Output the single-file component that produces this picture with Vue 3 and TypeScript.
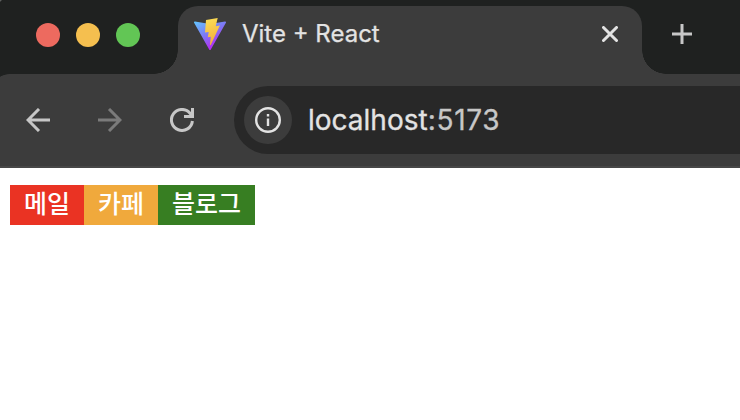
<script setup lang="ts">
interface MenuLink {
  label: string
  tone: string
}

const lights: string[] = ['close', 'minimize', 'expand']
const links: MenuLink[] = [
  { label: '메일', tone: 'mail' },
  { label: '카페', tone: 'cafe' },
  { label: '블로그', tone: 'blog' },
]
</script>

<template>
  <div class="window">
    <header class="strip">
      <div class="lights">
        <span v-for="light in lights" :key="light" class="light" :class="light"></span>
      </div>
      <div class="tab">
        <svg class="favicon" viewBox="0 0 32 32" width="32" height="32">
          <defs>
            <linearGradient id="shield" x1="0" y1="0" x2="0.58" y2="0.9">
              <stop offset="0" stop-color="#62c8ff" />
              <stop offset="0.55" stop-color="#7d78f5" />
              <stop offset="1" stop-color="#b42df2" />
            </linearGradient>
            <linearGradient id="bolt" x1="0.4" y1="0" x2="0.6" y2="1">
              <stop offset="0" stop-color="#fbdc55" />
              <stop offset="1" stop-color="#f3ac3a" />
            </linearGradient>
          </defs>
          <path
            d="M31.9 4.7 16.8 31.6a.9.9 0 0 1-1.6 0L.1 4.7a.9.9 0 0 1 .9-1.3L16 6.1 31 3.4a.9.9 0 0 1 .9 1.3Z"
            fill="url(#shield)"
          />
          <path
            d="M23.7 0 12 2 11 14.6 14.7 14.1 13.8 19.3 16.8 18.8 15.9 27 16.7 27 25.9 7.5 21.7 8.2Z"
            fill="url(#bolt)"
          />
        </svg>
        <span class="title">Vite + React</span>
        <svg class="dismiss" viewBox="0 0 16 16" width="16" height="16">
          <path d="M1.5 1.5 14.5 14.5M14.5 1.5 1.5 14.5" />
        </svg>
      </div>
      <svg class="new-tab" viewBox="0 0 20 20" width="20" height="20">
        <path d="M10 0V20M0 10H20" />
      </svg>
    </header>

    <nav class="toolbar">
      <svg class="icon" viewBox="0 0 24 24" width="24" height="24">
        <path d="M24 12H2M13 1 2 12 13 23" />
      </svg>
      <svg class="icon muted" viewBox="0 0 24 24" width="24" height="24">
        <path d="M0 12H22M11 1 22 12 11 23" />
      </svg>
      <svg class="icon" viewBox="0 0 24 24" width="24" height="24">
        <path d="M22.4 13A10.5 10.5 0 1 1 20 5.2L22 8.2" />
        <path d="M22.5 0V8.5H14" />
      </svg>
      <div class="address">
        <span class="info">
          <svg viewBox="0 0 26 26" width="26" height="26">
            <circle cx="13" cy="13" r="11.8" />
            <path d="M13 11.6V19M13 6.9V9.4" />
          </svg>
        </span>
        <span class="url">localhost<span class="port">:5173</span></span>
      </div>
    </nav>

    <main class="page">
      <a v-for="link in links" :key="link.label" class="link" :class="link.tone">{{ link.label }}</a>
    </main>
  </div>
</template>

<style>
body {
  margin: 0;
  overflow: hidden;
}
</style>

<style scoped>
.window {
  width: 740px;
  height: 420px;
  overflow: hidden;
  background: #fff;
  font-family: Inter, Roboto, sans-serif;
}

.strip {
  display: flex;
  box-sizing: border-box;
  height: 74px;
  padding-top: 6px;
  background: radial-gradient(circle at 14px 14px, #1f2120 18px, #5d5f5e 19px) 0 0 / 6px 6px no-repeat #1f2120;
}

.lights {
  display: flex;
  box-sizing: border-box;
  width: 178px;
  padding: 17px 0 0 36px;
  gap: 16px;
}

.light {
  width: 24px;
  height: 24px;
  border-radius: 50%;
}

.close {
  background: #ed6a5f;
}

.minimize {
  background: #f5bf4f;
}

.expand {
  background: #62c655;
}

.tab {
  position: relative;
  display: flex;
  box-sizing: border-box;
  align-items: center;
  width: 464px;
  height: 68px;
  padding: 0 24px 12px 16px;
  border-radius: 20px 20px 0 0;
  background: #3c3c3c;
}

.tab::before,
.tab::after {
  content: '';
  position: absolute;
  bottom: 0;
  width: 24px;
  height: 24px;
}

.tab::before {
  right: 100%;
  background: radial-gradient(circle at 0 0, transparent 23.5px, #3c3c3c 24px);
}

.tab::after {
  left: 100%;
  background: radial-gradient(circle at 100% 0, transparent 23.5px, #3c3c3c 24px);
}

.title {
  margin-left: 16px;
  color: #e3e3e3;
  font-size: 24px;
  line-height: 32px;
  white-space: nowrap;
  -webkit-text-stroke: 0.25px #e3e3e3;
}

.dismiss {
  margin-left: auto;
  fill: none;
  stroke: #e3e3e3;
  stroke-width: 3;
  stroke-linecap: round;
}

.new-tab {
  margin: 18px 0 0 30px;
  fill: none;
  stroke: #c7c7c7;
  stroke-width: 3;
}

.toolbar {
  display: flex;
  box-sizing: border-box;
  align-items: center;
  height: 94px;
  padding-left: 26px;
  border-bottom: 2px solid #474747;
  background: radial-gradient(circle at 10px 20px, #3c3c3c 19.5px, #1f2120 20.2px) 0 0 / 10px 8px no-repeat #3c3c3c;
}

.icon {
  flex: none;
  margin-right: 48px;
  fill: none;
  stroke: #c7c7c7;
  stroke-width: 3;
}

.icon.muted {
  stroke: #7b7b7b;
}

.address {
  display: flex;
  flex: 1;
  box-sizing: border-box;
  align-items: center;
  height: 68px;
  margin-left: -8px;
  padding-left: 10px;
  border-radius: 34px 0 0 34px;
  background: #282828;
}

.info {
  display: grid;
  place-items: center;
  width: 48px;
  height: 48px;
  border-radius: 50%;
  background: #3c3c3c;
}

.info svg {
  fill: none;
  stroke: #e3e3e3;
  stroke-width: 2.4;
}

.url {
  margin-left: 16px;
  color: #e3e3e3;
  font-size: 28px;
  line-height: 36px;
  -webkit-text-stroke: 0.3px currentColor;
}

.port {
  color: #c7c7c7;
  letter-spacing: 0.7px;
}

.page {
  display: flex;
  padding: 17px 10px;
}

.link {
  height: 40px;
  padding: 0 14px;
  color: #fff;
  font-family: 'Noto Sans CJK KR', sans-serif;
  font-size: 25px;
  font-weight: 500;
  line-height: 34px;
}

.mail {
  background: #ea3323;
}

.cafe {
  background: #f0a93c;
}

.blog {
  background: #377e22;
}
</style>
